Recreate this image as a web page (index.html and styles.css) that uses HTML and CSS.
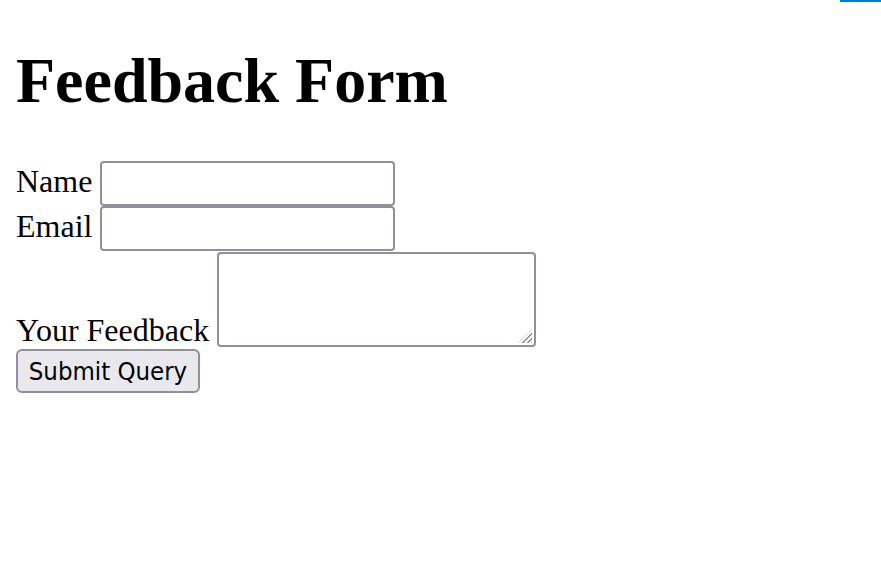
FILE: index.html
```html
<!DOCTYPE html>
<html lang="en">
<head>
<meta charset="utf-8">
<title>Feedback Form</title>
<link rel="stylesheet" href="styles.css">
</head>
<body>
<div class="top-bar"></div>
<h1 class="title">Feedback Form</h1>
<form class="form">
<label class="label" for="name">Name</label> <input class="field" type="text" id="name" name="name"><br>
<label class="label" for="email">Email</label> <input class="field" type="email" id="email" name="email"><br>
<label class="label" for="feedback">Your Feedback</label> <span class="area-wrap"><textarea class="area" id="feedback" name="feedback"></textarea></span><br>
<input class="submit" type="submit" value="Submit Query">
</form>
</body>
</html>
```

FILE: styles.css
```css
html, body {
  background: #ffffff;
}
body {
  margin: 16px;
  font-family: "Liberation Serif", "Times New Roman", serif;
  font-size: 32px;
  color: #000000;
}
.top-bar {
  position: absolute;
  top: 0;
  right: 0;
  width: 41px;
  height: 2px;
  background: #0078d7;
}
.title {
  font-size: 64px;
  font-weight: bold;
  margin: 28px 0 43px;
}
.form {
  margin: 0;
}
.field {
  box-sizing: border-box;
  width: 295px;
  height: 45px;
  margin: 0;
  padding: 2px 4px;
  border: 2px solid #8f8f9d;
  border-radius: 4px;
  background: #ffffff;
  font-family: "DejaVu Sans Condensed", "DejaVu Sans", sans-serif;
  font-size: 24px;
  vertical-align: baseline;
}
.area-wrap {
  position: relative;
  display: inline-block;
  vertical-align: text-bottom;
  line-height: 0;
}
.area-wrap::after {
  content: "";
  position: absolute;
  right: 4px;
  bottom: 5px;
  width: 14px;
  height: 14px;
  background: repeating-linear-gradient(135deg, transparent 0 2px, #8f8f9d 2px 3.4px);
  clip-path: polygon(100% 0, 100% 100%, 0 100%);
  pointer-events: none;
}
.area {
  box-sizing: border-box;
  display: block;
  width: 319px;
  height: 95px;
  margin: 1px 0 1px;
  padding: 2px 4px;
  border: 2px solid #8f8f9d;
  border-radius: 4px;
  background: #ffffff;
  font-family: "DejaVu Sans Condensed", "DejaVu Sans", sans-serif;
  font-size: 24px;
  resize: none;
}
.submit {
  box-sizing: border-box;
  width: 184px;
  height: 44px;
  margin: 0;
  padding: 0 6px;
  border: 2px solid #8f8f9d;
  border-radius: 6px;
  background: #e9e9ed;
  color: #000000;
  font-family: "DejaVu Sans Condensed", "DejaVu Sans", sans-serif;
  font-size: 25.5px;
  vertical-align: baseline;
}
```
